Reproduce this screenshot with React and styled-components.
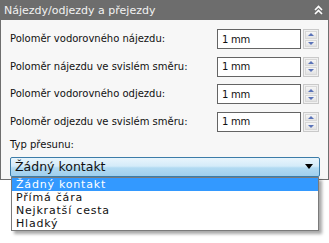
import React from 'react'
import styled, { createGlobalStyle } from 'styled-components'

const Global = createGlobalStyle`
  html, body { margin: 0; padding: 0; background: #ffffff; }
  body { font-family: "DejaVu Sans", sans-serif; }
`

const Page = styled.div`
  width: 329px;
  height: 243px;
`

const Panel = styled.div`
  width: 329px;
`

const Header = styled.div`
  height: 20px;
  background: #6d6d6d;
  color: #f2f2f2;
  display: flex;
  align-items: center;
  justify-content: space-between;
  padding: 0 6px 0 4px;
  font-size: 11px;
`

const Body = styled.div`
  background: #f7f7f7;
  border: 1px solid #6e6e6e;
  border-top: none;
  padding: 9px 9px 2px 9px;
  display: flex;
  flex-direction: column;
`

const Rows = styled.div`
  display: flex;
  flex-direction: column;
  gap: 7.67px;
`

const Row = styled.div`
  display: flex;
  align-items: center;
  height: 20px;
`

const Label = styled.span`
  flex: 1;
  font-size: 10px;
  line-height: 12px;
  color: #111;
`

const Input = styled.div`
  width: 84px;
  height: 20px;
  box-sizing: border-box;
  border: 1px solid #646464;
  background: #fff;
  display: flex;
  align-items: center;
  padding-left: 4px;
  font-size: 10px;
  letter-spacing: -0.3px;
  color: #111;
`

const Spin = styled.div`
  width: 16px;
  height: 20px;
  margin-left: 2px;
  box-sizing: border-box;
  border: 1px solid #c9c9c9;
  background: #f0f0f0;
  display: flex;
  flex-direction: column;
  padding: 1px;
  gap: 1px;
`

const SpinBtn = styled.div`
  flex: 1;
  background: linear-gradient(#f6f6f6, #e2e2e2);
  border: 1px solid #d8d8d8;
  display: flex;
  align-items: center;
  justify-content: center;
  &::after {
    content: '';
    border-left: 3px solid transparent;
    border-right: 3px solid transparent;
    ${p => (p.$down ? 'border-top: 3px solid #5a73b8;' : 'border-bottom: 3px solid #5a73b8;')}
  }
`

const TypeLabel = styled(Label)`
  margin-top: 7px;
  flex: none;
`

const ComboWrap = styled.div`
  position: relative;
  margin-top: 6px;
  width: 310px;
`

const Combo = styled.div`
  height: 20px;
  box-sizing: border-box;
  border: 1px solid #3c7ca8;
  border-radius: 2px;
  background: linear-gradient(#e9f5fc 0%, #d4ebf9 45%, #b2daf2 55%, #9fcfee 100%);
  display: flex;
  align-items: center;
  justify-content: space-between;
  padding: 0 6px 0 4px;
  font-size: 12.5px;
  color: #111;
`

const Arrow = styled.span`
  border-left: 4px solid transparent;
  border-right: 4px solid transparent;
  border-top: 5px solid #000;
`

const List = styled.div`
  position: absolute;
  z-index: 2;
  left: 1px;
  top: 20px;
  width: 308px;
  box-sizing: border-box;
  border: 1px solid #7a7a7a;
  background: #fff;
  box-shadow: 3px 3px 3px rgba(0, 0, 0, 0.35);
`

const Item = styled.div`
  height: 13px;
  line-height: 13px;
  padding-left: 4px;
  font-size: 11px;
  letter-spacing: 0.8px;
  white-space: nowrap;
  background: ${p => (p.$active ? '#3399ff' : '#fff')};
  color: ${p => (p.$active ? '#fff' : '#111')};
`

const Chevrons = () => (
  <svg width="9" height="10" viewBox="0 0 9 10">
    <path d="M1 5 L4.5 1.5 L8 5 M1 9 L4.5 5.5 L8 9" stroke="#fff" strokeWidth="1.6" fill="none" />
  </svg>
)

const fields = [
  'Poloměr vodorovného nájezdu:',
  'Poloměr nájezdu ve svislém směru:',
  'Poloměr vodorovného odjezdu:',
  'Poloměr odjezdu ve svislém směru:',
]

const options = ['Žádný kontakt', 'Přímá čára', 'Nejkratší cesta', 'Hladký']

export default function App() {
  return (
    <Page>
      <Global />
      <Panel>
        <Header>
          <span>Nájezdy/odjezdy a přejezdy</span>
          <Chevrons />
        </Header>
        <Body>
          <Rows>
            {fields.map(f => (
              <Row key={f}>
                <Label>{f}</Label>
                <Input>1 mm</Input>
                <Spin>
                  <SpinBtn />
                  <SpinBtn $down />
                </Spin>
              </Row>
            ))}
          </Rows>
          <TypeLabel>Typ přesunu:</TypeLabel>
          <ComboWrap>
            <Combo>
              <span>Žádný kontakt</span>
              <Arrow />
            </Combo>
            <List>
              {options.map((o, i) => (
                <Item key={o} $active={i === 0}>{o}</Item>
              ))}
            </List>
          </ComboWrap>
        </Body>
      </Panel>
    </Page>
  )
}
